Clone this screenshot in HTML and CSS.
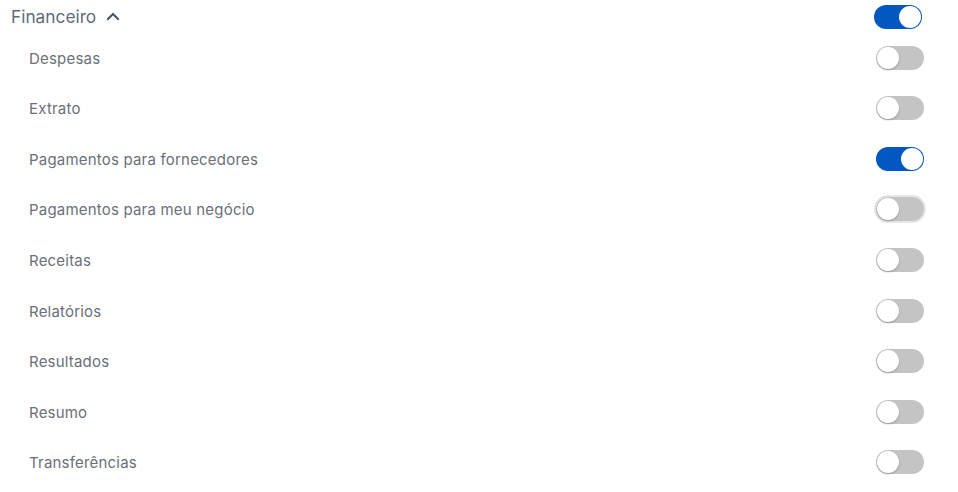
FILE: index.html
```html
<!DOCTYPE html>
<html lang="pt">
<head>
<meta charset="utf-8">
<link rel="stylesheet" href="styles.css">
</head>
<body>
<div class="panel">
  <div class="group-header">
    <div class="group-title">
      <span>Financeiro</span>
      <svg class="chevron" width="16" height="16" viewBox="0 0 16 16"><path d="M3 11 L8 6 L13 11" fill="none" stroke="#4a5363" stroke-width="2" stroke-linecap="square"/></svg>
    </div>
    <span class="toggle on"><span class="knob"></span></span>
  </div>
  <ul class="items">
    <li class="item"><span>Despesas</span><span class="toggle"><span class="knob"></span></span></li>
    <li class="item"><span>Extrato</span><span class="toggle"><span class="knob"></span></span></li>
    <li class="item"><span>Pagamentos para fornecedores</span><span class="toggle on"><span class="knob"></span></span></li>
    <li class="item"><span>Pagamentos para meu negócio</span><span class="toggle focus"><span class="knob"></span></span></li>
    <li class="item"><span>Receitas</span><span class="toggle"><span class="knob"></span></span></li>
    <li class="item"><span>Relatórios</span><span class="toggle"><span class="knob"></span></span></li>
    <li class="item"><span>Resultados</span><span class="toggle"><span class="knob"></span></span></li>
    <li class="item"><span>Resumo</span><span class="toggle"><span class="knob"></span></span></li>
    <li class="item"><span>Transferências</span><span class="toggle"><span class="knob"></span></span></li>
  </ul>
</div>
</body>
</html>
```
FILE: styles.css
```css
* { box-sizing: border-box; }
html, body { margin: 0; padding: 0; background: #ffffff; }
body { font-family: Inter, "Noto Sans", sans-serif; }
.panel { width: 958px; padding: 4px 36px 0 11px; }
.group-header {
  display: flex; align-items: center; justify-content: space-between;
  height: 25px;
}
.group-title {
  display: flex; align-items: center; gap: 9px;
  font-size: 17.3px; color: #636b78;
}
.chevron { display: block; margin-top: -2px; }
.items { list-style: none; margin: 3.5px -2px 0 18px; padding: 0; }
.item {
  display: flex; align-items: center; justify-content: space-between;
  height: 50.55px; font-size: 15px; color: #6b6f79; letter-spacing: 0.2px;
}
.item > span:first-child { padding-top: 1px; }
.toggle {
  display: flex; align-items: center;
  width: 48px; height: 24px; border-radius: 12px;
  background: #c4c4c4; padding: 1px;
}
.toggle .knob {
  width: 22px; height: 22px; border-radius: 50%;
  background: #ffffff; box-shadow: 0 1px 2px rgba(0,0,0,0.25);
}
.toggle.on { background: #0257c3; justify-content: flex-end; }
.toggle.on .knob { box-shadow: none; }
.toggle.focus { box-shadow: 0 0 0 2px #e6e6e6; }
```
